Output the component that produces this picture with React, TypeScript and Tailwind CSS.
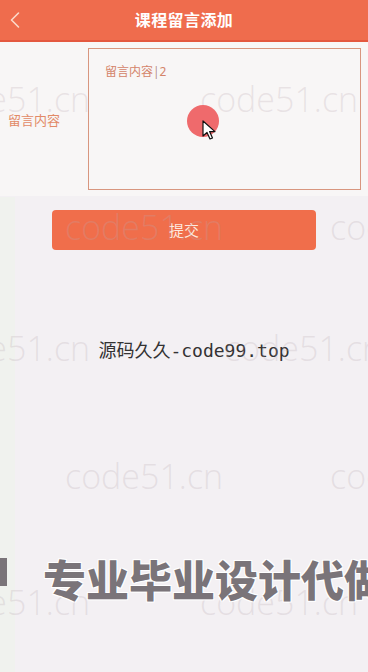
import { ChevronLeft } from "lucide-react";

const marks = [
  { top: 74, left: -68 },
  { top: 74, left: 200 },
  { top: 202, left: 65 },
  { top: 202, left: 330 },
  { top: 323, left: -68 },
  { top: 323, left: 224 },
  { top: 451, left: 65 },
  { top: 451, left: 330 },
  { top: 577, left: -68 },
  { top: 577, left: 200 },
];

const App = () => {
  return (
    <div
      className="relative w-[368px] h-[672px] overflow-hidden bg-[#f3f0f3]"
      style={{ fontFamily: '"Noto Sans", "Noto Sans CJK SC", sans-serif' }}
    >
      {/* 顶部导航 */}
      <header className="relative flex items-center justify-center h-[42px] bg-[#ef6c4d] border-b-2 border-[#e4583f]">
        <ChevronLeft
          className="absolute left-[1px] top-[6px] text-[#fbd9c9]"
          size={28}
          strokeWidth={1.4}
        />
        <h1 className="text-white text-[16px] font-bold tracking-wide">
          课程留言添加
        </h1>
      </header>

      {/* 表单 */}
      <div className="flex items-center h-[154px] bg-[#f8f6f6] pr-[7px]">
        <div className="w-[88px] pl-[8px] pt-[4px] text-[13px] text-[#e28a67]">
          留言内容
        </div>
        <div className="flex-1 h-[142px] border border-[#d8967f] px-[16px] pt-[14px]">
          <p className="text-[12px] text-[#d4846a]">
            留言内容<span className="text-[#a06050] font-light">|</span>2
          </p>
        </div>
      </div>

      <div className="flex justify-center pt-[14px]">
        <button className="w-[264px] h-[40px] rounded-[4px] bg-[#f06e4b] text-[#fde9df] text-[15px]">
          提交
        </button>
      </div>

      <p
        className="mt-[87px] text-center text-[18px] text-[#333] pl-[20px]"
        style={{ fontFamily: '"DejaVu Sans Mono", "Noto Sans CJK SC", monospace' }}
      >
        源码久久-code99.top
      </p>

      {/* 左侧色带 */}
      <div className="absolute left-0 top-[197px] bottom-0 w-[15px] bg-[#f0f2ee]" />

      {/* 水印 */}
      {marks.map((m, i) => (
        <span
          key={i}
          className="absolute text-[34px] font-light text-[#b8a8b0]/25 whitespace-nowrap pointer-events-none"
          style={{ top: m.top, left: m.left, fontFamily: '"Open Sans", sans-serif' }}
        >
          code51.cn
        </span>
      ))}

      {/* 触摸指示 */}
      <div className="absolute left-[187px] top-[105px] w-[32px] h-[32px] rounded-full bg-[#ef6a6c]" />
      <svg
        className="absolute left-[202px] top-[120px]"
        width="16"
        height="22"
        viewBox="0 0 16 22"
      >
        <path
          d="M1 1 L1 16 L5 12.5 L8 19 L10.5 18 L7.6 11.6 L13 11.6 Z"
          fill="#fff"
          stroke="#111"
          strokeWidth="1.2"
          strokeLinejoin="round"
        />
      </svg>

      {/* 底部广告字 */}
      <div
        className="absolute left-[43px] top-[546px] whitespace-nowrap text-[43px] font-black text-[#7a7479]"
        style={{
          fontFamily: '"Noto Sans CJK SC", sans-serif',
          textShadow: "1px 1px 0 #fff, -1px -1px 0 #fff, 1px -1px 0 #fff, -1px 1px 0 #fff",
        }}
      >
        专业毕业设计代做
      </div>
      <div className="absolute left-0 top-[558px] w-[7px] h-[28px] bg-[#7a7479]" />
    </div>
  );
};

export default App;
